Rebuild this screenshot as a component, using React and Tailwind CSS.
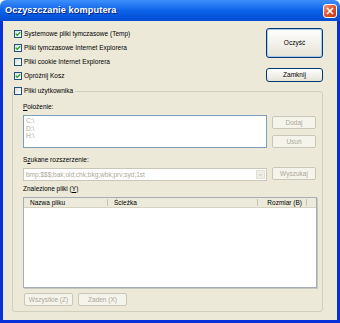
import React from 'react';

const Check = ({ checked }) => (
  <span className="w-[8px] h-[8px] border border-[#1c5180] bg-gradient-to-br from-[#dcdcd7] to-white flex items-center justify-center shrink-0">
    {checked && (
      <svg width="6" height="6" viewBox="0 0 6 6">
        <path d="M0.8 2.8 L2.3 4.4 L5.2 1.2" stroke="#21a121" strokeWidth="1.3" fill="none" />
      </svg>
    )}
  </span>
);

const CheckRow = ({ label, checked }) => (
  <div className="h-[14px] flex items-center gap-[2px]">
    <Check checked={checked} />
    <span className="text-[6.5px] leading-none">{label}</span>
  </div>
);

const DisabledButton = ({ children, className }) => (
  <div
    className={`border border-[#c9c7ba] rounded-[2px] bg-[#f5f4ea] text-[#aca899] text-[6.5px] flex items-center justify-center ${className}`}
  >
    {children}
  </div>
);

const App = () => {
  const options = [
    { label: 'Systemowe pliki tymczasowe (Temp)', checked: true },
    { label: 'Pliki tymczasowe Internet Explorera', checked: true },
    { label: 'Pliki cookie Internet Explorera', checked: false },
    { label: 'Opróżnij Kosz', checked: true },
  ];

  return (
    <div className="w-[340px] h-[323px] flex flex-col font-['Liberation_Sans',Arial,sans-serif] text-black">
      {/* Title bar */}
      <div className="h-[21px] rounded-t-[6px] bg-gradient-to-b from-[#3d8ffb] via-[#0b62e8] to-[#044cd2] flex items-center pl-[5px] pr-[3px]">
        <span className="text-white font-bold text-[9.2px] tracking-[0.1px] [text-shadow:1px_1px_0_#0a1e7a]">
          Oczyszczanie komputera
        </span>
        <div className="ml-auto w-[14px] h-[14px] rounded-[3px] border border-white bg-gradient-to-br from-[#f09b7d] via-[#e0522f] to-[#c23b15] flex items-center justify-center">
          <svg width="8" height="8" viewBox="0 0 8 8">
            <path d="M1 1 L7 7 M7 1 L1 7" stroke="white" strokeWidth="1.6" />
          </svg>
        </div>
      </div>

      {/* Body */}
      <div className="flex-1 flex flex-col border-x-[3px] border-b-[3px] border-[#0831d9] bg-[#ece9d8]">
        <div className="flex">
          <div className="flex flex-col pt-[6px] pl-[11px]">
            {options.map((o) => (
              <CheckRow key={o.label} label={o.label} checked={o.checked} />
            ))}
          </div>
          <div className="ml-auto mr-[14px] flex flex-col">
            <div className="mt-[7px] w-[57px] h-[30px] rounded-[3px] border border-[#003c74] bg-gradient-to-b from-white to-[#e6e3d6] shadow-[inset_0_0_0_1px_#a8c8f0] flex items-center justify-center text-[6.5px]">
              Oczyść
            </div>
            <div className="mt-[10px] w-[57px] h-[14px] rounded-[3px] border border-[#003c74] bg-gradient-to-b from-white to-[#e6e3d6] flex items-center justify-center text-[6.5px]">
              Zamknij
            </div>
          </div>
        </div>

        {/* Group box */}
        <div className="relative mt-[8px] ml-[9px] mr-[14px] h-[221px] border border-[#d0d0bf] rounded-[3px] flex flex-col pl-[10px] pr-[5px]">
          <div className="absolute left-[1px] top-[-8px] bg-[#ece9d8] pr-[2px]">
            <CheckRow label="Pliki użytkownika" checked={false} />
          </div>

          <div className="mt-[11px] h-[8px] flex items-center text-[6.5px]">
            <span className="underline">P</span>ołożenie:
          </div>
          <div className="mt-[4px] flex">
            <div className="flex-1 h-[33px] bg-white border border-[#7f9db9] px-[2px] pt-[1px] text-[6.5px] text-[#aca899] leading-[7.6px]">
              <div>C:\</div>
              <div>D:\</div>
              <div>H:\</div>
            </div>
            <div className="ml-[5px] mr-[1px] flex flex-col">
              <DisabledButton className="mt-[1px] w-[44px] h-[13px]">Dodaj</DisabledButton>
              <DisabledButton className="mt-[6px] w-[44px] h-[13px]">Usuń</DisabledButton>
            </div>
          </div>

          <div className="mt-[8px] h-[8px] flex items-center text-[6.5px]">
            S<span className="underline">z</span>ukane rozszerzenie:
          </div>
          <div className="mt-[4px] flex items-center">
            <div className="flex-1 h-[13px] bg-white border border-[#c9c7ba] flex items-center pl-[2px] pr-[1px] text-[6.5px] text-[#aca899]">
              <span>bmp;$$$;bak;old;chk;bkg;wbk;prv;syd;1st</span>
              <div className="ml-auto w-[9px] h-[9px] bg-[#f0efe6] border border-[#e3e1d5] flex items-center justify-center">
                <svg width="5" height="4" viewBox="0 0 5 4">
                  <path d="M0.5 0.8 L2.5 2.8 L4.5 0.8" stroke="#c9c7ba" strokeWidth="1" fill="none" />
                </svg>
              </div>
            </div>
            <DisabledButton className="ml-[5px] mr-[1px] -mt-[2px] w-[44px] h-[13px]">Wyszukaj</DisabledButton>
          </div>

          <div className="mt-[4px] h-[8px] flex items-center text-[6.5px]">
            Znalezione pliki (<span className="underline">Y</span>)
          </div>
          <div className="mt-[4px] h-[91px] bg-white border border-[#a5acb5] shadow-[1px_1px_0_#c5c9c0] flex flex-col">
            <div className="h-[10px] flex bg-[#ebeadb] border-b border-[#d6d2c2] text-[6.5px]">
              <div className="w-[84px] border-r border-[#c7c5b2] my-[1px] flex items-center pl-[6px]">Nazwa pliku</div>
              <div className="w-[150px] border-r border-[#c7c5b2] my-[1px] flex items-center pl-[6px]">Ścieżka</div>
              <div className="w-[49px] border-r border-[#c7c5b2] my-[1px] flex items-center justify-end pr-[4px]">Rozmiar (B)</div>
              <div className="flex-1" />
            </div>
          </div>

          <div className="mt-[5px] flex gap-[5px] pl-[1px]">
            <DisabledButton className="w-[49px] h-[13px]">Wszystkie (Z)</DisabledButton>
            <DisabledButton className="w-[49px] h-[13px]">Żaden (X)</DisabledButton>
          </div>
        </div>
      </div>
    </div>
  );
};

export default App;
